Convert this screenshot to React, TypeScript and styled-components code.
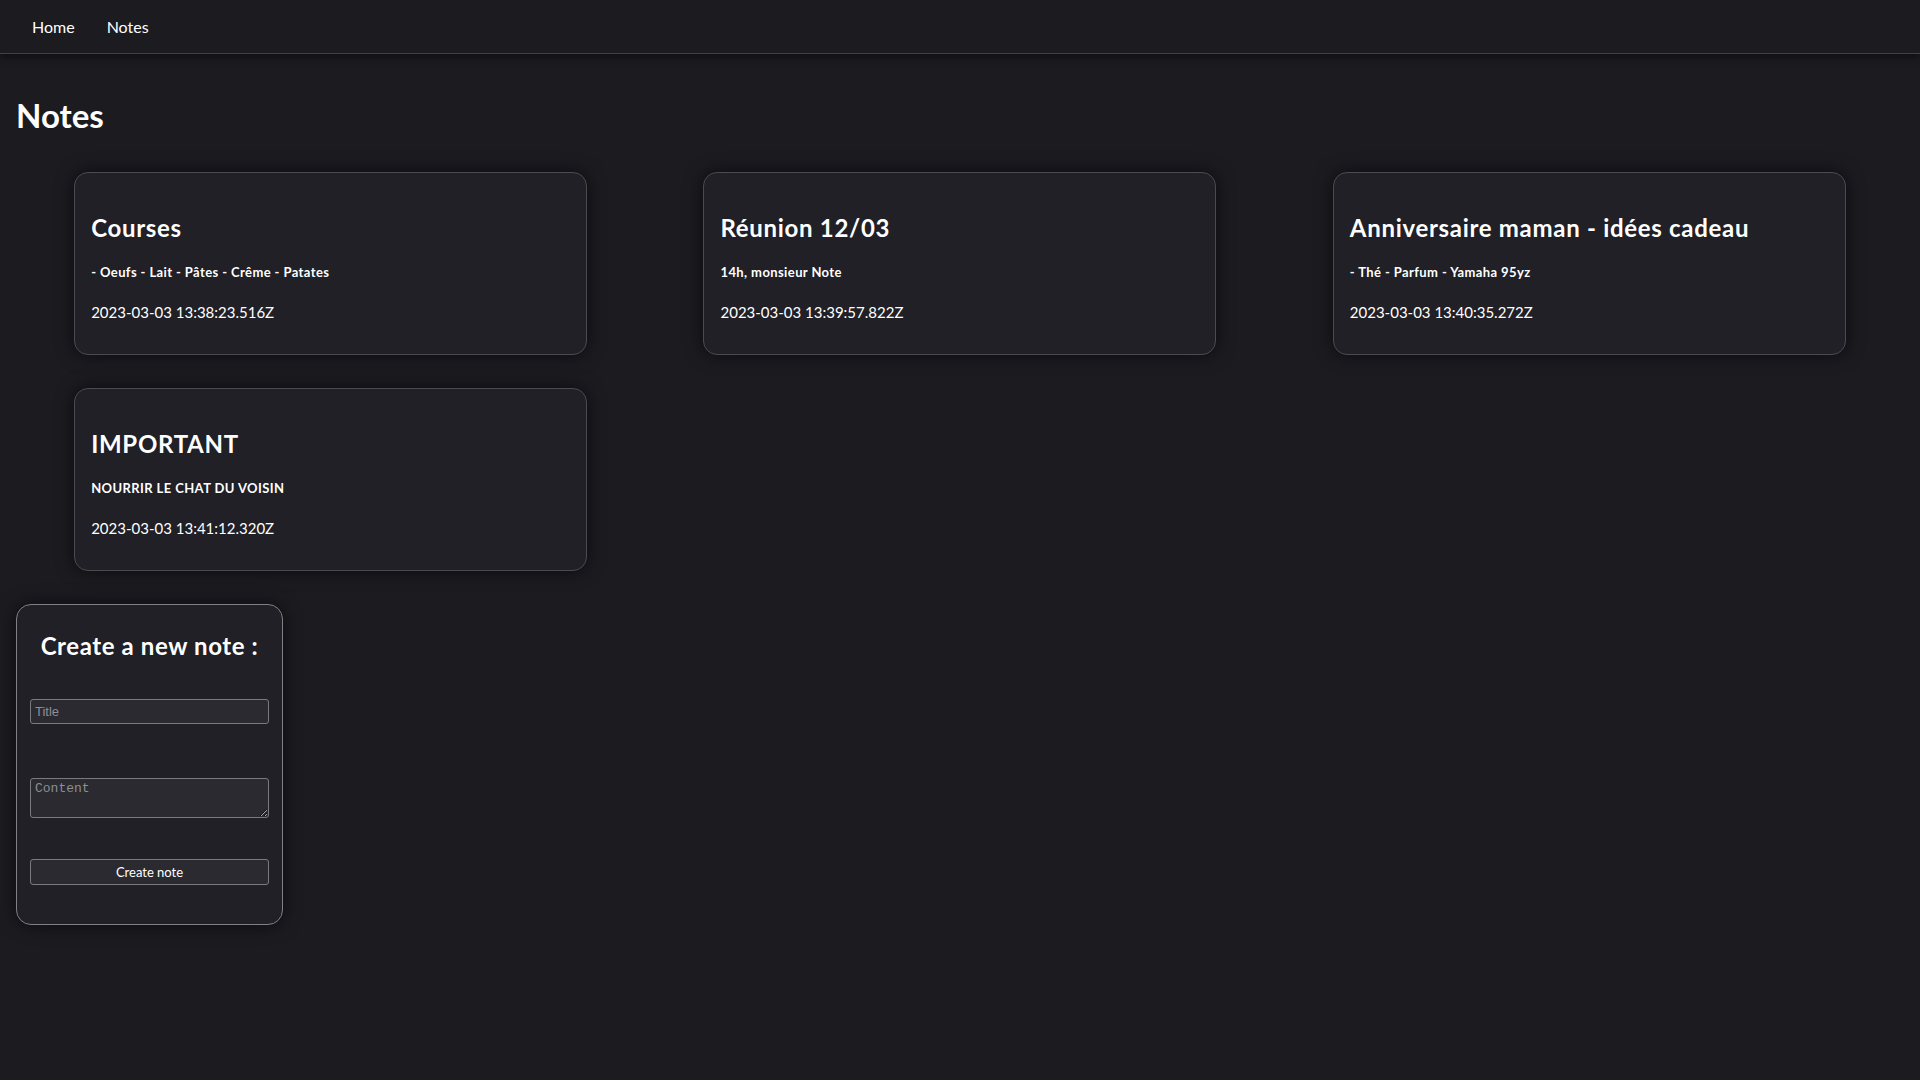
import React from 'react'
import styled, { createGlobalStyle } from 'styled-components'

const GlobalStyle = createGlobalStyle`
  body {
    margin: 0;
    background-color: #1b1b20;
    color: #ffffff;
    font-family: Lato, "Noto Sans", sans-serif;
  }
`

const NavBar = styled.nav`
  height: 53px;
  display: flex;
  align-items: center;
  gap: 32px;
  padding: 0 32px;
  border-bottom: 1px solid #414147;
  box-shadow: 0 3px 8px rgba(0, 0, 0, 0.45);
  background-color: #1b1b20;

  a {
    color: #ffffff;
    text-decoration: none;
    font-size: 16px;
  }
`

const Main = styled.main`
  padding: 0 16px 40px;
`

const PageTitle = styled.h1`
  font-size: 33px;
  font-weight: 700;
  margin: 41px 0 37px;
  line-height: 40px;
`

const NotesGrid = styled.div`
  display: grid;
  grid-template-columns: repeat(3, 1fr);
  row-gap: 33px;
  justify-items: center;
`

const Card = styled.div`
  box-sizing: border-box;
  width: 513px;
  height: 183px;
  padding: 0 16px;
  background-color: #202026;
  border: 1px solid #4a4a50;
  border-radius: 14px;
  box-shadow: 0 0 18px rgba(0, 0, 0, 0.55);
  display: flex;
  flex-direction: column;
`

const NoteTitle = styled.h2`
  font-size: 24px;
  font-weight: 700;
  line-height: 30px;
  letter-spacing: 0.7px;
  margin: 40px 0 0;
`

const NoteContent = styled.h5`
  font-size: 13px;
  font-weight: 700;
  line-height: 16px;
  letter-spacing: 0.4px;
  margin: 21px 0 0;
`

const NoteDate = styled.p`
  font-size: 15px;
  line-height: 20px;
  margin: 22px 0 0;
`

const FormCard = styled.form`
  box-sizing: border-box;
  width: 267px;
  height: 321px;
  margin-top: 33px;
  padding: 0 13px;
  background-color: #202026;
  border: 1px solid #808086;
  border-radius: 15px;
  box-shadow: 0 0 18px rgba(0, 0, 0, 0.55);
  display: flex;
  flex-direction: column;
`

const FormTitle = styled.h2`
  font-size: 24px;
  font-weight: 700;
  line-height: 30px;
  letter-spacing: 0.6px;
  text-align: center;
  margin: 26px 0 0;
`

const Field = styled.input`
  box-sizing: border-box;
  height: 25px;
  margin-top: 38px;
  padding: 0 4px;
  background-color: #2b2a30;
  border: 1px solid #7a7a80;
  border-radius: 3px;
  color: #ffffff;
  font-family: "Liberation Sans", Arial, sans-serif;
  font-size: 13px;

  &::placeholder {
    color: #8e8e94;
  }
`

const Area = styled.textarea`
  box-sizing: border-box;
  height: 40px;
  margin-top: 54px;
  padding: 2px 4px;
  background-color: #2b2a30;
  border: 1px solid #7a7a80;
  border-radius: 3px;
  color: #ffffff;
  font-family: "Liberation Mono", monospace;
  font-size: 13px;

  &::placeholder {
    color: #8e8e94;
  }
`

const SubmitButton = styled.button`
  box-sizing: border-box;
  height: 26px;
  margin-top: 41px;
  background-color: #2b2a30;
  border: 1px solid #7a7a80;
  border-radius: 3px;
  color: #ffffff;
  font-family: Lato, "Noto Sans", sans-serif;
  font-size: 13px;
`

const notes = [
  { title: 'Courses', content: '- Oeufs - Lait - Pâtes - Crême - Patates', date: '2023-03-03 13:38:23.516Z' },
  { title: 'Réunion 12/03', content: '14h, monsieur Note', date: '2023-03-03 13:39:57.822Z' },
  { title: 'Anniversaire maman - idées cadeau', content: '- Thé - Parfum - Yamaha 95yz', date: '2023-03-03 13:40:35.272Z' },
  { title: 'IMPORTANT', content: 'NOURRIR LE CHAT DU VOISIN', date: '2023-03-03 13:41:12.320Z' },
]

const App = () => {
  return (
    <>
      <GlobalStyle />
      <NavBar>
        <a href='#'>Home</a>
        <a href='#'>Notes</a>
      </NavBar>
      <Main>
        <PageTitle>Notes</PageTitle>
        <NotesGrid>
          {notes.map(note => (
            <Card key={note.date}>
              <NoteTitle>{note.title}</NoteTitle>
              <NoteContent>{note.content}</NoteContent>
              <NoteDate>{note.date}</NoteDate>
            </Card>
          ))}
        </NotesGrid>
        <FormCard onSubmit={e => e.preventDefault()}>
          <FormTitle>Create a new note :</FormTitle>
          <Field type='text' placeholder='Title' />
          <Area placeholder='Content' />
          <SubmitButton type='submit'>Create note</SubmitButton>
        </FormCard>
      </Main>
    </>
  )
}

export default App
